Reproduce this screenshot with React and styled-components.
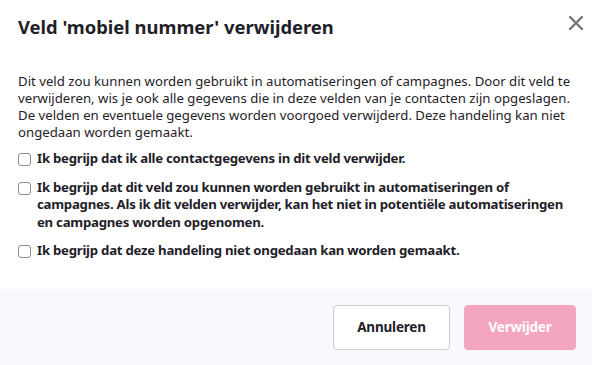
import React from 'react';
import styled, { createGlobalStyle } from 'styled-components';

const GlobalStyle = createGlobalStyle`
	html, body {
		margin: 0;
		padding: 0;
		background: #ffffff;
	}
	body {
		font-family: "Noto Sans", "Open Sans", sans-serif;
		color: #1f2129;
	}
`;

const Modal = styled.div`
	width: 592px;
	height: 365px;
	display: flex;
	flex-direction: column;
	background: #ffffff;
`;

const Header = styled.div`
	display: flex;
	justify-content: space-between;
	align-items: flex-start;
	padding: 14px 7px 0 18px;
`;

const Title = styled.h1`
	margin: 0;
	font-size: 18.4px;
	font-weight: 700;
	line-height: 26px;
	color: #1f2129;
`;

const Close = styled.button`
	border: 0;
	background: none;
	padding: 0;
	width: 18px;
	height: 18px;
	display: flex;
	align-items: center;
	justify-content: center;
	color: #74767e;
	cursor: pointer;
`;

const Body = styled.div`
	flex: 1;
	padding: 33px 18px 0;
	display: flex;
	flex-direction: column;
`;

const Text = styled.p`
	margin: 0 0 9px;
	font-size: 13.2px;
	line-height: 17px;
	color: #1f2129;
`;

const Option = styled.label`
	display: flex;
	align-items: flex-start;
	gap: 6px;
	margin-bottom: 11px;
	font-size: 13.2px;
	line-height: 17.5px;
	font-weight: 700;
	letter-spacing: -0.25px;
	color: #1f2129;
`;

const Box = styled.span`
	flex: none;
	width: 11px;
	height: 11px;
	margin-top: 3px;
	border: 1px solid #8b8d94;
	border-radius: 3px;
	background: #fff;
`;

const Footer = styled.div`
	height: 76px;
	background: #f8f9fd;
	display: flex;
	justify-content: flex-end;
	align-items: center;
	gap: 14px;
	padding: 0 16px;
`;

const Button = styled.button`
	height: 45px;
	width: ${p => p.$width}px;
	padding: 0;
	border-radius: 4px;
	font-family: inherit;
	font-size: 13.5px;
	font-weight: 700;
	letter-spacing: -0.2px;
	border: 1px solid ${p => (p.$primary ? '#f5a6bf' : '#c9ccd8')};
	background: ${p => (p.$primary ? '#f5a6bf' : '#ffffff')};
	color: ${p => (p.$primary ? '#ffffff' : '#1f2129')};
`;

const options = [
	'Ik begrijp dat ik alle contactgegevens in dit veld verwijder.',
	'Ik begrijp dat dit veld zou kunnen worden gebruikt in automatiseringen of campagnes. Als ik dit velden verwijder, kan het niet in potentiële automatiseringen en campagnes worden opgenomen.',
	'Ik begrijp dat deze handeling niet ongedaan kan worden gemaakt.',
];

export default function App() {
	return (
		<Modal>
			<GlobalStyle />
			<Header>
				<Title>Veld 'mobiel nummer' verwijderen</Title>
				<Close aria-label="Sluiten">
					<svg width="16" height="16" viewBox="0 0 16 16">
						<path d="M2 2L14 14M14 2L2 14" stroke="currentColor" strokeWidth="2.4" strokeLinecap="round" />
					</svg>
				</Close>
			</Header>
			<Body>
				<Text>
					Dit veld zou kunnen worden gebruikt in automatiseringen of campagnes. Door dit veld te
					verwijderen, wis je ook alle gegevens die in deze velden van je contacten zijn opgeslagen.
					De velden en eventuele gegevens worden voorgoed verwijderd. Deze handeling kan niet
					ongedaan worden gemaakt.
				</Text>
				{options.map(o => (
					<Option key={o}>
						<Box />
						<span>{o}</span>
					</Option>
				))}
			</Body>
			<Footer>
				<Button $width={117}>Annuleren</Button>
				<Button $primary $width={112}>Verwijder</Button>
			</Footer>
		</Modal>
	);
}
